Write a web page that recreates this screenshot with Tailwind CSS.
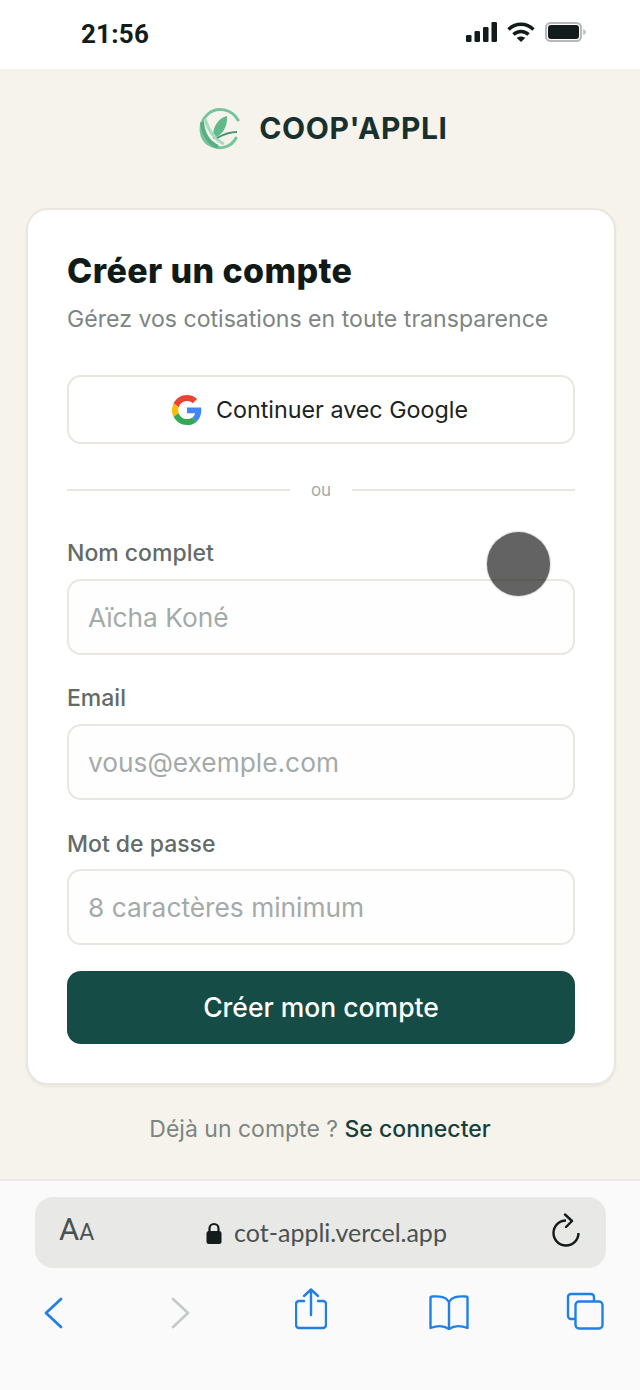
<!DOCTYPE html>
<html lang="fr">
<head>
    <meta charset="UTF-8">
    <meta name="viewport" content="width=device-width, initial-scale=1.0">
    <title>Coop'Appli</title>
    <script src="https://cdn.jsdelivr.net/npm/@tailwindcss/browser@4"></script>
</head>
<body class="bg-[#f6f3ec] font-['Inter',sans-serif] overflow-hidden">
    <div class="relative w-[640px] h-[1390px] flex flex-col">
        <!-- status bar -->
        <div class="h-[69px] bg-white flex items-center justify-between pl-[81px] pr-[53px] shrink-0">
            <span class="font-['Roboto',sans-serif] font-bold text-[26px] tracking-[0.2px] text-[#121c1a] leading-none mt-[-1px]">21:56</span>
            <div class="flex items-center gap-[10px] mt-[-5px]">
                <svg class="mr-[-1px]" width="32" height="20" viewBox="0 0 32 20" fill="#121c1a">
                    <rect x="0" y="13" width="5.5" height="7" rx="1.2"/>
                    <rect x="8.5" y="9" width="5.5" height="11" rx="1.2"/>
                    <rect x="17" y="5" width="5.5" height="15" rx="1.2"/>
                    <rect x="25.5" y="0" width="5.5" height="20" rx="1.2"/>
                </svg>
                <svg width="28" height="20" viewBox="0 0 28 20" fill="none" stroke="#121c1a" stroke-width="3.4">
                    <path d="M1.5 7.5C8.5 0.5 19.5 0.5 26.5 7.5"/>
                    <path d="M6.5 12.5C10.5 8.5 17.5 8.5 21.5 12.5"/>
                    <path d="M14 20L9.8 16C12 14 16 14 18.2 16Z" fill="#121c1a" stroke="none"/>
                </svg>
                <svg width="42" height="20" viewBox="0 0 42 20">
                    <rect x="1" y="1" width="35" height="18" rx="4.5" fill="none" stroke="#b5b8b7" stroke-width="2"/>
                    <rect x="3" y="3" width="31" height="14" rx="3" fill="#121c1a"/>
                    <path d="M38 7C40 7.5 41 8.5 41 10C41 11.5 40 12.5 38 13Z" fill="#c4c7c6"/>
                </svg>
            </div>
        </div>

        <!-- page -->
        <main class="flex-1 flex flex-col px-[26px] bg-[#f6f3ec]">
            <div class="h-[139px] flex items-center justify-center gap-[18px] pb-[22px] pl-[7px]">
                <svg class="blur-[0.5px]" width="42" height="44" viewBox="0 0 42 44" fill="none">
                    <path d="M39 14C33 3 18 0 9 8C-1 17 0 33 11 39C20 44 32 42 37 32" stroke="#76c49c" stroke-width="3" stroke-linecap="round"/>
                    <path d="M3 16C4 28 10 37 19 41" stroke="#58ad82" stroke-width="4"/>
                    <path d="M28 10C20 12 13 20 14 33C22 30 29 22 28 10Z" fill="#62b98c"/>
                    <path d="M6 13C9 23 15 33 25 38" stroke="#a5dcc0" stroke-width="3"/>
                    <path d="M18 32C25 28 31 26 38 26" stroke="#4c8f70" stroke-width="1.8"/>
                </svg>
                <span class="font-bold text-[30px] tracking-[0.6px] text-[#18312e] leading-none">COOP'APPLI</span>
            </div>

            <div class="w-[590px] h-[877px] shrink-0 bg-white border-2 border-[#e8e6df] rounded-[22px] shadow-[0_2px_3px_rgba(0,0,0,0.05)] px-[39px] pt-[39px]">
                <h1 class="font-extrabold text-[34px] leading-[44px] tracking-[0.4px] text-[#101b18]">Créer un compte</h1>
                <p class="text-[23.1px] leading-[32px] text-[#7d8583] mt-[10px]">Gérez vos cotisations en toute transparence</p>

                <button class="w-full h-[69px] mt-[40px] pt-[1px] pr-[2px] border-2 border-[#e9e7e0] rounded-[14px] flex items-center justify-center gap-[14px] text-[23.3px] text-[#1a2321]">
                    <svg width="30" height="30" viewBox="0 0 48 48">
                        <path fill="#EA4335" d="M24 9.500c3.500 0 6.700 1.200 9.200 3.600l6.900-6.900C35.900 2.400 30.400 0 24 0 14.600 0 6.500 5.400 2.600 13.200l8 6.200C12.500 13.600 17.800 9.500 24 9.500z"/>
                        <path fill="#4285F4" d="M46.900 24.500c0-1.600-.1-3.100-.4-4.500H24v9h12.900c-.6 3-2.200 5.500-4.800 7.200l7.700 6c4.500-4.200 7.100-10.300 7.100-17.700z"/>
                        <path fill="#FBBC05" d="M10.600 28.600c-.5-1.400-.8-3-.8-4.600s.3-3.200.8-4.600l-8-6.200C.9 16.500 0 20.100 0 24s.9 7.500 2.600 10.800l8-6.200z"/>
                        <path fill="#34A853" d="M24 48c6.500 0 11.900-2.100 15.900-5.800l-7.700-6c-2.200 1.500-4.900 2.300-8.200 2.300-6.200 0-11.500-4.100-13.400-9.900l-8 6.200C6.500 42.600 14.600 48 24 48z"/>
                    </svg>
                    Continuer avec Google
                </button>

                <div class="flex items-center gap-[21px] h-[24px] mt-[34px] text-[17px] text-[#a3a9a7]">
                    <div class="flex-1 h-[2px] bg-[#e9e7e0]"></div>
                    <span class="leading-[26px]">ou</span>
                    <div class="flex-1 h-[2px] bg-[#e9e7e0]"></div>
                </div>

                <label class="block h-[28px] text-[23px] font-medium leading-[30px] text-[#636b69] mt-[36px]">Nom complet</label>
                <div class="h-[76px] mt-[13px] pt-[1px] border-2 border-[#e9e7e0] rounded-[14px] bg-[#fefefe] flex items-center px-[19px] text-[26.3px] text-[#a4aaa8]">Aïcha Koné</div>

                <label class="block h-[28px] text-[23px] font-medium leading-[30px] text-[#636b69] mt-[28px]">Email</label>
                <div class="h-[76px] mt-[13px] pt-[1px] border-2 border-[#e9e7e0] rounded-[14px] bg-[#fefefe] flex items-center px-[19px] text-[26.3px] text-[#a4aaa8]">vous@exemple.com</div>

                <label class="block h-[28px] text-[23px] font-medium leading-[30px] text-[#636b69] mt-[29px]">Mot de passe</label>
                <div class="h-[76px] mt-[12px] pt-[1px] border-2 border-[#e9e7e0] rounded-[14px] bg-[#fefefe] flex items-center px-[19px] text-[26.3px] text-[#a4aaa8]">8 caractères minimum</div>

                <button class="w-full h-[73px] mt-[26px] bg-[#154c45] rounded-[14px] text-white font-medium text-[26.5px]">Créer mon compte</button>
            </div>

            <p class="text-center text-[23px] mt-[29px] leading-[30px] text-[#7d8583]">Déjà un compte ? <span class="font-medium text-[#18403a]">Se connecter</span></p>
        </main>

        <!-- safari bottom bar -->
        <div class="h-[211px] shrink-0 bg-[#fafafa] border-t-2 border-[#e8e8e6] pl-[35px] pr-[34px] pt-[16px]">
            <div class="h-[71px] bg-[#e8e8e6] rounded-[18px] relative flex items-center justify-center gap-[12px] pl-[12px] font-['Lato',sans-serif] text-[25px] text-[#4a5250]">
                <span class="absolute left-[24px] top-[17px] leading-none font-['Roboto',sans-serif] text-[#4a5250]"><span class="text-[31px]">A</span><span class="text-[23px]">A</span></span>
                <svg width="16" height="22" viewBox="0 0 16 22" fill="#121c1a">
                    <path d="M3.500 10V6.500a4.500 4.500 0 0 1 9 0V10" fill="none" stroke="#121c1a" stroke-width="2.200"/>
                    <rect x="0.500" y="9" width="15" height="13" rx="2.500"/>
                </svg>
                <span>cot-appli.vercel.app</span>
                <svg class="absolute left-[517px] top-[16px]" width="30" height="36" viewBox="0 0 30 36" fill="none" stroke="#121c1a" stroke-width="2.400">
                    <path d="M14 7.500A12.500 12.500 0 1 0 26.500 20"/>
                    <path d="M13 1.500L20 8L14 14" stroke-linecap="round" stroke-linejoin="round"/>
                </svg>
            </div>
            <div class="flex items-center h-[60px] mt-[15px] pl-[9px]">
                <svg width="20" height="32" viewBox="0 0 20 32" fill="none" stroke="#2180e8" stroke-width="2.800" stroke-linecap="round" stroke-linejoin="round"><path d="M17 2L2 16L17 30"/></svg>
                <svg class="ml-[106px]" width="20" height="32" viewBox="0 0 20 32" fill="none" stroke="#c6cbc9" stroke-width="2.800" stroke-linecap="round" stroke-linejoin="round"><path d="M3 2L18 16L3 30"/></svg>
                <svg class="ml-[105px] mb-[8px]" width="32" height="42" viewBox="0 0 32 42" fill="none" stroke="#2180e8" stroke-width="2.400" stroke-linecap="round" stroke-linejoin="round"><path d="M9 13H4a3 3 0 0 0-3 3v21a3 3 0 0 0 3 3h24a3 3 0 0 0 3-3V16a3 3 0 0 0-3-3h-5"/><path d="M16 27V2M9 8l7-6.500L23 8"/></svg>
                <svg class="ml-[102px] mb-[2px]" width="40" height="36" viewBox="0 0 40 36" fill="none" stroke="#2180e8" stroke-width="2.400" stroke-linejoin="round"><path d="M20 8C17 3 12 2 3 2.500C2 2.500 1.500 3 1.500 4V34C8 31.500 15 31.500 20 35C25 31.500 32 31.500 38.500 34V4C38.500 3 38 2.500 37 2.500C28 2 23 3 20 8Z"/><path d="M20 8V35"/></svg>
                <svg class="ml-[97px] mb-[4px]" width="38" height="38" viewBox="0 0 38 38" fill="none" stroke="#2180e8" stroke-width="2.400" stroke-linejoin="round"><path d="M9 27H5a3 3 0 0 1-3-3V5a3 3 0 0 1 3-3h20a3 3 0 0 1 3 3v4"/><rect x="9.500" y="9.500" width="27" height="27" rx="3.500"/></svg>
            </div>
        </div>

        <!-- touch indicator -->
        <div class="absolute left-[487px] top-[532px] w-[63px] h-[64px] rounded-full bg-black/61 shadow-[0_0_2px_rgba(120,135,130,0.8)]"></div>
    </div>
</body>
</html>
